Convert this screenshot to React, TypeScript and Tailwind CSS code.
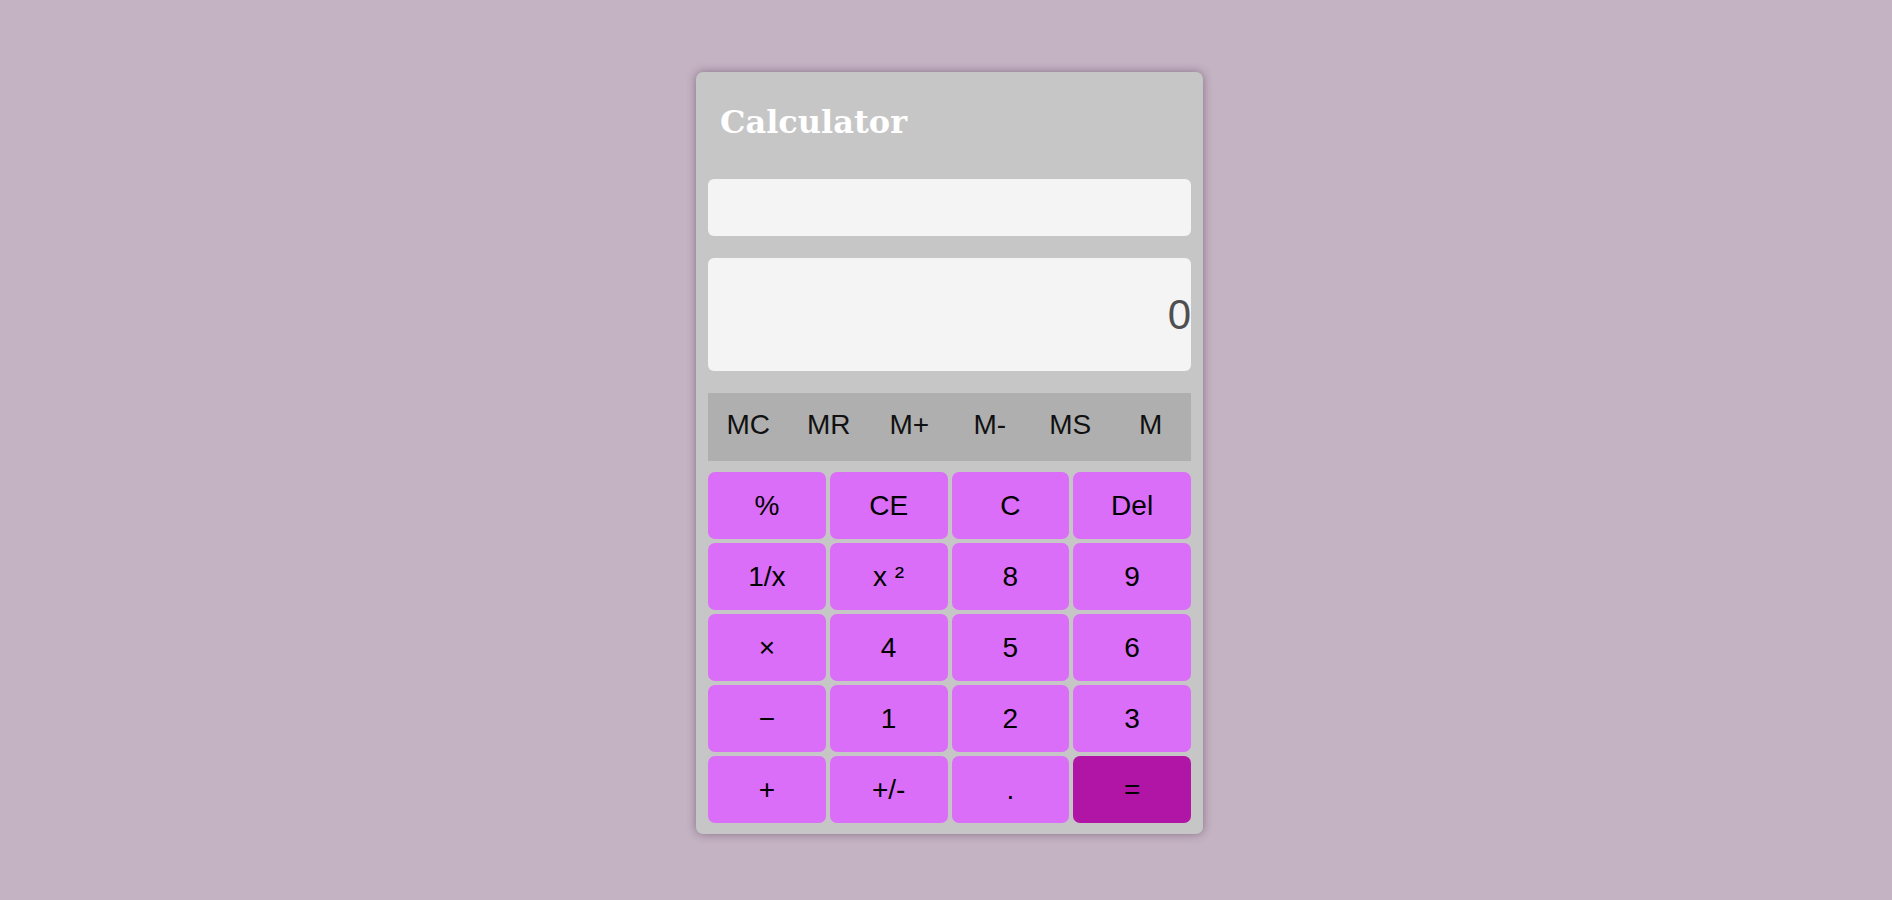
import React from 'react';

const memoryKeys = ['MC', 'MR', 'M+', 'M-', 'MS', 'M'];

const keys = [
  '%', 'CE', 'C', 'Del',
  '1/x', 'x ²', '8', '9',
  '×', '4', '5', '6',
  '−', '1', '2', '3',
  '+', '+/-', '.', '=',
];

const App = () => {
  return (
    <div className="min-h-[900px] w-full bg-[#c4b3c3] pt-[72px] pl-[7px] flex justify-center items-start font-['Liberation_Sans',Arial,sans-serif]">
      <div className="w-[507px] rounded-[7px] bg-[#c6c6c6] px-3 pb-[11px] shadow-[0_0_10px_rgba(60,30,60,0.45)]">
        <div className="h-[107px] pt-[34px] pl-[12px]">
          <h1 className="text-[32px] leading-[32px] font-bold text-white font-['DejaVu_Serif',Georgia,serif]">
            Calculator
          </h1>
        </div>

        <div className="h-[57px] rounded-[6px] bg-[#f4f4f4]"></div>

        <div className="mt-[22px] h-[113px] rounded-[6px] bg-[#f4f4f4] flex items-center justify-end">
          <span className="text-[42px] text-[#4f4f4f]">0</span>
        </div>

        <div className="mt-[22px] h-[68px] bg-[#afafaf] grid grid-cols-6 items-center pb-[4px]">
          {memoryKeys.map((k) => (
            <div key={k} className="text-center text-[28px] text-[#111]">
              {k}
            </div>
          ))}
        </div>

        <div className="mt-[11px] grid grid-cols-4 gap-[4px]">
          {keys.map((k) => (
            <button
              key={k}
              className={`h-[67px] rounded-[7px] text-[28px] text-black flex items-center justify-center ${
                k === '=' ? 'bg-[#b015a5]' : 'bg-[#db6ef8]'
              }`}
            >
              {k}
            </button>
          ))}
        </div>
      </div>
    </div>
  );
};

export default App;
